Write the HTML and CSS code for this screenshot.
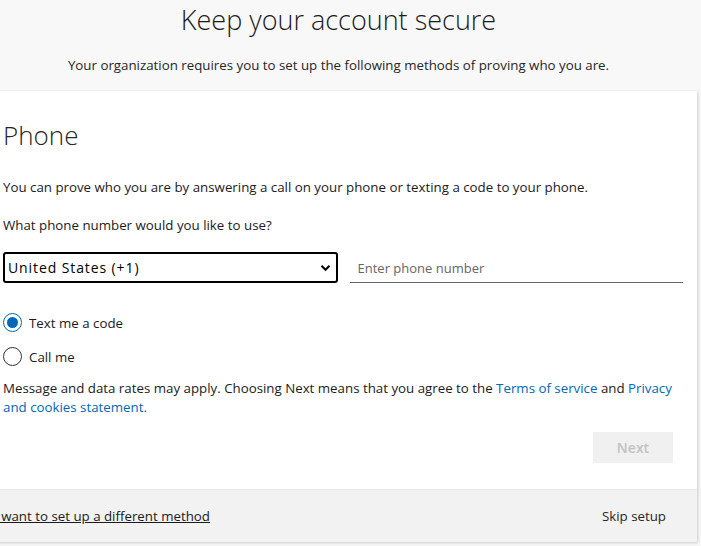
FILE: index.html
```html
<!DOCTYPE html>
<html lang="en">
<head>
<meta charset="utf-8">
<title>Keep your account secure</title>
<link rel="stylesheet" href="styles.css">
</head>
<body>
<div class="page">
  <div class="top">
    <h1>Keep your account secure</h1>
    <p class="lead">Your organization requires you to set up the following methods of proving who you are.</p>
  </div>

  <div class="card">
    <div class="card-body">
      <h2>Phone</h2>
      <p class="intro">You can prove who you are by answering a call on your phone or texting a code to your phone.</p>
      <p class="ask">What phone number would you like to use?</p>

      <div class="fields">
        <div class="select">
          <span>United States (+1)</span>
          <svg width="11" height="8" viewBox="0 0 11 8"><path d="M1.5 1.8 5.5 5.8 9.5 1.8" fill="none" stroke="#000" stroke-width="2"/></svg>
        </div>
        <div class="phone">Enter phone number</div>
      </div>

      <div class="choices">
        <div class="choice"><span class="radio on"></span>Text me a code</div>
        <div class="choice"><span class="radio"></span>Call me</div>
      </div>

      <p class="terms">Message and data rates may apply. Choosing Next means that you agree to the <a href="#">Terms of service</a> and <a href="#">Privacy and cookies statement.</a></p>

      <div class="actions"><button class="next">Next</button></div>
    </div>
    <div class="card-foot">
      <a href="#" class="other">I want to set up a different method</a>
      <span class="skip">Skip setup</span>
    </div>
  </div>
</div>
</body>
</html>
```

FILE: styles.css
```css
html,body{margin:0;padding:0;}
body{background-color:#f8f8f8;font-family:"Open Sans",Arial,sans-serif;font-size:13.3px;color:#1b1b1b;overflow:hidden;}
.page{width:701px;height:546px;}
.top{text-align:center;padding:4px 24px 0 0;height:87px;}
h1{margin:0;font-size:27px;font-weight:300;color:#1b1b1b;line-height:32px;}
.lead{margin:20px 0 0 0;font-size:13.3px;color:#262626;}
.card{margin-left:-21px;width:718px;background-color:#ffffff;box-shadow:1px 1px 3px rgba(0,0,0,0.18);}
.card-body{padding:26px 24px 26px 24px;}
h2{margin:0;font-size:26px;font-weight:300;line-height:36px;color:#262626;}
.intro{margin:24px 0 0 0;line-height:20px;}
.ask{margin:18px 0 0 0;line-height:20px;}
.fields{display:flex;gap:12px;margin-top:17px;width:680px;}
.select{box-sizing:border-box;width:335px;height:31px;border:2px solid #000;border-radius:3px;display:flex;align-items:center;justify-content:space-between;padding:0 5px 0 3px;font-size:14px;letter-spacing:0.9px;color:#000;}
.phone{box-sizing:border-box;width:334px;height:31px;border-bottom:1px solid #666;padding:7px 0 0 8px;font-size:13px;color:#666;}
.choices{margin-top:30px;}
.choice{display:flex;align-items:center;gap:7px;height:19px;margin-bottom:15px;}
.radio{box-sizing:border-box;width:19px;height:19px;border:1px solid #333;border-radius:50%;display:flex;align-items:center;justify-content:center;}
.radio.on{border-color:#0067b8;}
.radio.on::after{content:"";width:11px;height:11px;border-radius:50%;background-color:#0067b8;}
.terms{margin:-2px 0 0 0;line-height:19px;width:690px;}
.terms a{color:#0067b8;text-decoration:none;}
.actions{display:flex;justify-content:flex-end;margin-top:15px;}
.next{width:80px;height:31px;border:none;background-color:#f0f0f0;color:#c2c2c2;font-family:inherit;font-size:14px;font-weight:600;}
.card-foot{background-color:#f2f2f2;border-top:1px solid #e6e6e6;height:52px;display:flex;align-items:center;justify-content:space-between;padding:0 31px 0 15px;}
.other{color:#1b1b1b;text-decoration:underline;}
.skip{color:#262626;}
```
